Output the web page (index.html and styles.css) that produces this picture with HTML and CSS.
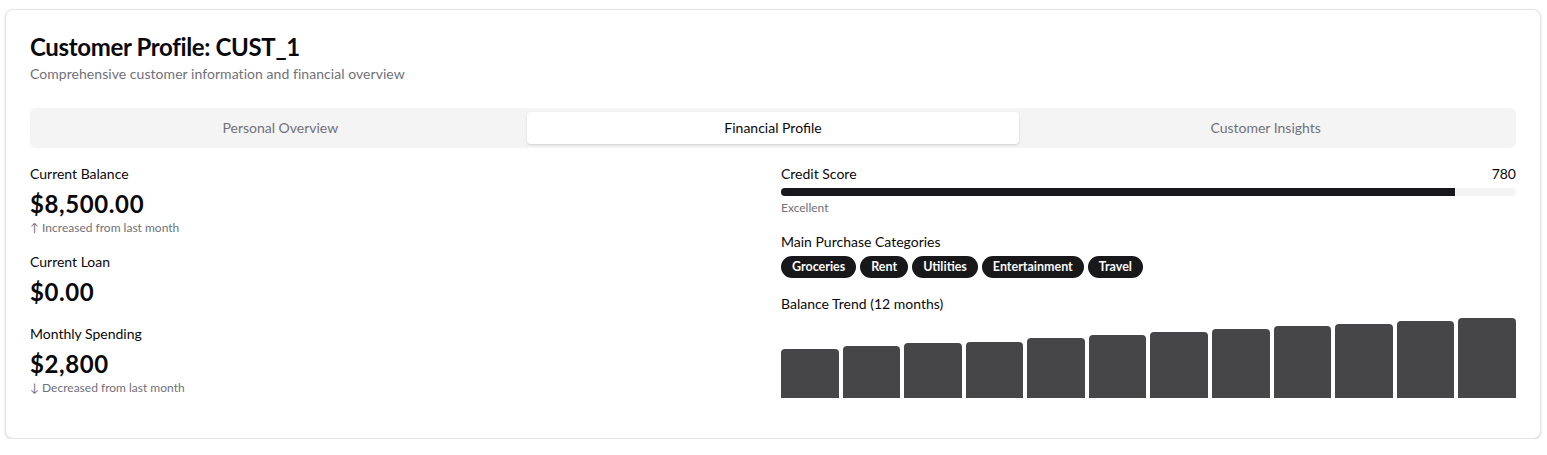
FILE: index.html
```html
<!DOCTYPE html>
<html lang="en">
<head>
<meta charset="utf-8">
<title>Customer Profile</title>
<link rel="stylesheet" href="styles.css">
</head>
<body>
<div class="card">
  <header class="card-header">
    <h1 class="title">Customer Profile: CUST_1</h1>
    <p class="subtitle">Comprehensive customer information and financial overview</p>
  </header>
  <div class="tabs">
    <div class="tab">Personal Overview</div>
    <div class="tab tab-active">Financial Profile</div>
    <div class="tab">Customer Insights</div>
  </div>
  <div class="content">
    <div class="col">
      <div class="stat">
        <div class="label">Current Balance</div>
        <div class="value">$8,500.00</div>
        <div class="note">↑ Increased from last month</div>
      </div>
      <div class="stat">
        <div class="label">Current Loan</div>
        <div class="value">$0.00</div>
      </div>
      <div class="stat">
        <div class="label">Monthly Spending</div>
        <div class="value">$2,800</div>
        <div class="note">↓ Decreased from last month</div>
      </div>
    </div>
    <div class="col">
      <div class="stat">
        <div class="label-row">
          <span class="label">Credit Score</span>
          <span class="label">780</span>
        </div>
        <div class="progress"><div class="progress-fill" style="width: 91.76%"></div></div>
        <div class="note">Excellent</div>
      </div>
      <div class="stat">
        <div class="label">Main Purchase Categories</div>
        <div class="badges">
          <span class="badge">Groceries</span>
          <span class="badge">Rent</span>
          <span class="badge">Utilities</span>
          <span class="badge">Entertainment</span>
          <span class="badge">Travel</span>
        </div>
      </div>
      <div class="stat">
        <div class="label">Balance Trend (12 months)</div>
        <div class="chart">
          <div class="bar" style="height: 61.2%"></div>
          <div class="bar" style="height: 64.7%"></div>
          <div class="bar" style="height: 68.2%"></div>
          <div class="bar" style="height: 70.6%"></div>
          <div class="bar" style="height: 75.3%"></div>
          <div class="bar" style="height: 78.8%"></div>
          <div class="bar" style="height: 82.4%"></div>
          <div class="bar" style="height: 85.9%"></div>
          <div class="bar" style="height: 89.4%"></div>
          <div class="bar" style="height: 92.9%"></div>
          <div class="bar" style="height: 96.5%"></div>
          <div class="bar" style="height: 100%"></div>
        </div>
      </div>
    </div>
  </div>
</div>
</body>
</html>
```
FILE: styles.css
```css
* { box-sizing: border-box; }
html, body { background: #ffffff; }
body {
  margin: 0;
  padding: 9px 6px 0 5px;
  font-family: Lato, "Open Sans", sans-serif;
  color: #09090b;
}
.card {
  border: 1px solid #e4e4e7;
  border-radius: 8px;
  box-shadow: 0 1px 3px rgba(0,0,0,0.10), 0 1px 2px rgba(0,0,0,0.06);
  background: #fff;
  padding: 24px 24px 40px;
}
.card-header { margin-bottom: 24px; }
.title {
  margin: 0;
  font-size: 24px;
  line-height: 26px;
  font-weight: 700;
  letter-spacing: -0.35px;
}
.subtitle {
  margin: 4px 0 0;
  font-size: 14px;
  line-height: 20px;
  color: #71717a;
  letter-spacing: 0.05px;
}
.tabs {
  display: grid;
  grid-template-columns: repeat(3, 1fr);
  height: 40px;
  padding: 4px;
  background: #f4f4f5;
  border-radius: 6px;
  margin-bottom: 16px;
}
.tab {
  display: flex;
  align-items: center;
  justify-content: center;
  font-size: 14px;
  line-height: 18px;
  padding-bottom: 1px;
  color: #71717a;
  border-radius: 4px;
}
.tab-active {
  background: #fff;
  color: #09090b;
  box-shadow: 0 1px 3px rgba(0,0,0,0.10), 0 1px 2px rgba(0,0,0,0.06);
}
.content {
  display: grid;
  grid-template-columns: 1fr 1fr;
  gap: 16px;
}
.col {
  display: flex;
  flex-direction: column;
  gap: 16px;
}
.label {
  font-size: 14px;
  line-height: 20px;
  color: #09090b;
}
.label-row {
  display: flex;
  justify-content: space-between;
}
.value {
  margin-top: 4px;
  font-size: 24px;
  line-height: 32px;
  font-weight: 700;
  letter-spacing: 0.6px;
}
.note {
  font-size: 12px;
  line-height: 16px;
  color: #71717a;
}
.progress {
  margin-top: 4px;
  height: 8px;
  background: #f4f4f5;
  border-radius: 9999px;
  overflow: hidden;
  margin-bottom: 4px;
}
.progress-fill {
  height: 100%;
  background: #18181b;
}
.badges {
  margin-top: 4px;
  display: flex;
  gap: 4px;
  flex-wrap: wrap;
}
.badge {
  background: #18181b;
  color: #fafafa;
  font-size: 12.5px;
  line-height: 16px;
  font-weight: 700;
  padding: 3px 11px;
  border-radius: 9999px;
}
.chart {
  margin-top: 4px;
  height: 80px;
  display: flex;
  align-items: flex-end;
  gap: 4px;
}
.bar {
  flex: 1;
  background: rgba(24,24,27,0.8);
  border-radius: 4px 4px 0 0;
}
```
